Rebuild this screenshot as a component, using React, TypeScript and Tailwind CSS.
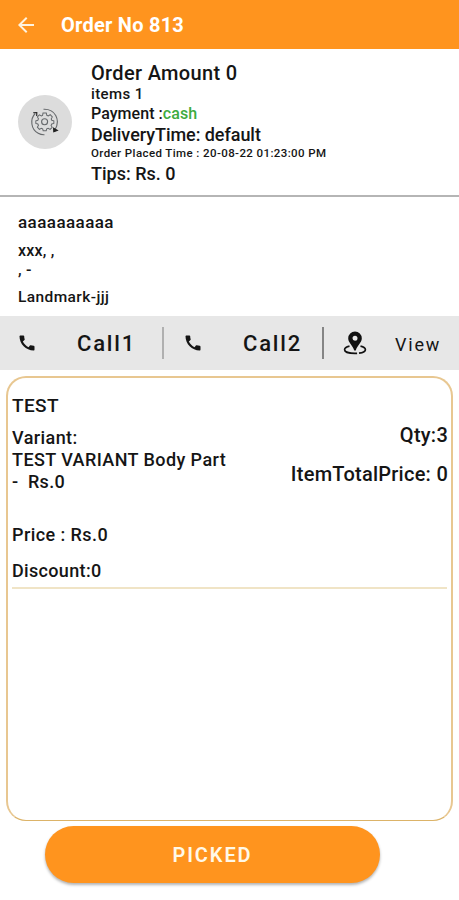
import { MdArrowBack, MdCall } from 'react-icons/md'

const order = {
  number: 813,
  amount: 0,
  items: 1,
  payment: 'cash',
  deliveryTime: 'default',
  placedAt: '20-08-22 01:23:00 PM',
  tips: 0,
}

const product = {
  name: 'TEST',
  variant: 'TEST VARIANT Body Part',
  qty: 3,
  total: 0,
}

function ProcessIcon() {
  return (
    <svg width="30" height="30" viewBox="0 0 30 30" fill="none" stroke="#65686b" strokeWidth="1.1">
      <path d="M13.2 6.5h3.6l.6 2.4 1.5.7 2.2-1.3 2.3 2.4-1.2 2.2.6 1.5 2.3.6v2.8l-2.3.7-.7 1.5 1.2 2.1-2.3 2.3-2.2-1.2-1.5.6-.6 2.2h-3.3l-.6-2.2-1.5-.7-2.1 1.2-2.2-2.3 1.2-2.1-.7-1.5-2.2-.6V15l2.2-.6.7-1.6-1.2-2.1 2.2-2.3 2.2 1.3 1.3-.7z" transform="translate(1 .2) scale(.91)" />
      <circle cx="14.6" cy="14.800" r="3" />
      <path d="M5.200 6.500C-.2 12 .8 22.500 8.200 26.300c2 1.200 4 1.600 6.300 1.500" />
      <path d="M13.500 2.200c11.500-.5 17.300 10.300 11.500 20.500" />
      <path d="M3.200 5.700l3.600-.1-.1 3.300" stroke="#222" />
      <path d="M23.600 21.200l.2 3.600 3.600-1.400z" fill="#222" stroke="#222" />
    </svg>
  )
}

function PlaceIcon() {
  return (
    <svg width="24" height="24" viewBox="0 0 24 24">
      <path d="M6.500 15.200C3.500 15.900 1.600 17.200 1.600 18.700c0 2.200 4.600 3.700 10.400 3.700s10.400-1.500 10.400-3.700c0-1.500-1.900-2.800-4.900-3.500" fill="none" stroke="#111" strokeWidth="1.700" strokeDasharray="20 2" />
      <path fillRule="evenodd" d="M12 .5a6.800 6.800 0 0 0-6.800 6.800c0 4.700 4.900 7.200 6 12.300h1.600c1.100-5.100 6-7.600 6-12.300A6.800 6.800 0 0 0 12 .5zm0 4.200a2.500 2.500 0 1 1 0 5 2.500 2.500 0 0 1 0-5z" fill="#111" />
    </svg>
  )
}

export default function App() {
  return (
    <div className="flex h-[900px] w-[459px] flex-col overflow-hidden bg-white font-['Roboto',sans-serif] font-medium text-[#151515]">
      <header className="flex h-[49px] shrink-0 items-center bg-[#ff941e] pl-[14px] text-white">
        <MdArrowBack size={24} className="text-[#fff3df]" />
        <h1 className="mt-[2px] ml-[23px] text-[20px] leading-[49px] font-bold tracking-[0.25px]">Order No {order.number}</h1>
      </header>

      {/* Order summary */}
      <section className="flex h-[148px] shrink-0 border-b-2 border-[#b5b5b5] pl-[18px]">
        <div className="mt-[46px] flex h-[54px] w-[54px] items-center justify-center rounded-full bg-[#dcdcdc]">
          <ProcessIcon />
        </div>
        <div className="ml-[19px] pt-[13px] whitespace-nowrap">
          <p className="text-[20px] leading-[22px] tracking-[0.33px]">Order Amount {order.amount}</p>
          <p className="text-[15px] leading-[21px] tracking-[0.4px]">items {order.items}</p>
          <p className="text-[16px] leading-[17px] tracking-[0.05px]">
            Payment :<span className="text-[#3dab40]">{order.payment}</span>
          </p>
          <p className="text-[18px] leading-[26px] tracking-[-0.05px]">DeliveryTime: {order.deliveryTime}</p>
          <p className="text-[11.5px] leading-[11px] tracking-[0.4px]">Order Placed Time : {order.placedAt}</p>
          <p className="text-[18px] leading-[30px]">Tips: Rs. {order.tips}</p>
        </div>
      </section>

      {/* Address */}
      <section className="h-[119px] shrink-0 pt-[14px] pl-[18px]">
        <p className="text-[17px] leading-[22px] tracking-[0.43px]">aaaaaaaaaa</p>
        <p className="mt-[8px] text-[16px] leading-[20px] tracking-[0.2px]">xxx, ,</p>
        <p className="text-[16px] leading-[18px] tracking-[0.2px]">, -</p>
        <p className="mt-[8px] text-[15.5px] leading-[20px] tracking-[0.4px]">Landmark-jjj</p>
      </section>

      <nav className="flex h-[54px] shrink-0 items-center bg-[#e7e7e7]">
        <button className="flex w-[162px] items-center pl-[17px]">
          <MdCall size={20} />
          <span className="ml-[40px] text-[22px] tracking-[1.8px]">Call1</span>
        </button>
        <span className="h-[32px] w-[2px] bg-[#b0b0b0]" />
        <button className="flex w-[158px] items-center pl-[19px]">
          <MdCall size={20} />
          <span className="ml-[40px] text-[22px] tracking-[1.8px]">Call2</span>
        </button>
        <span className="h-[32px] w-[2px] bg-[#858585]" />
        <button className="flex flex-1 items-center pl-[19px]">
          <PlaceIcon />
          <span className="mt-[2px] ml-[28px] text-[18px] font-normal tracking-[1.8px]">View</span>
        </button>
      </nav>

      {/* Items */}
      <main className="mx-[6px] mt-[6px] h-[445px] shrink-0 rounded-[20px] border-2 border-b border-[#e8c791] border-b-[#dcb368] px-[4px] pt-[17px]">
        <div className="flex h-[194px] justify-between border-b-2 border-[#f0e4c6] whitespace-nowrap">
          <div>
            <p className="text-[19px] leading-[22px] tracking-[0.4px]">{product.name}</p>
            <p className="mt-[10px] text-[18px] leading-[22px] tracking-[0.42px]">Variant:</p>
            <p className="text-[18px] leading-[22px] tracking-[0.42px]">{product.variant}</p>
            <p className="text-[18px] leading-[22px] tracking-[0.3px] whitespace-pre">-  Rs.0</p>
            <p className="mt-[31px] text-[18px] leading-[22px] tracking-[0.42px]">Price : Rs.0</p>
            <p className="mt-[14px] text-[18px] leading-[22px] tracking-[0.33px]">Discount:0</p>
          </div>
          <div className="-mr-px pt-[29px] text-right text-[20px] leading-[22px] tracking-[0.25px]">
            <p>Qty:{product.qty}</p>
            <p className="mt-[17px]">ItemTotalPrice: {product.total}</p>
          </div>
        </div>
      </main>

      <button className="mt-[5px] ml-[45px] h-[57px] w-[335px] shrink-0 rounded-full bg-[#ff941e] text-[20px] font-semibold tracking-[1.9px] text-[#fff8e8] shadow-[0_2px_3px_rgba(0,0,0,0.3)]">
        PICKED
      </button>
    </div>
  )
}
